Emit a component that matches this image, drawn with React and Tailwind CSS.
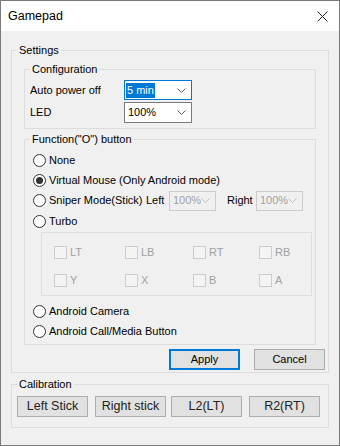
import React from 'react';

const font = { fontFamily: '"Liberation Sans", Arial, sans-serif' };

const Chevron = ({ color = '#606060' }) => (
    <svg width="9" height="5" viewBox="0 0 9 5" className="shrink-0">
        <polyline points="0.5,0.5 4.5,4.5 8.5,0.5" fill="none" stroke={color} strokeWidth="1" />
    </svg>
);

const Group = ({ label, className = '', children }) => (
    <fieldset className={`border border-[#dcdcdc] min-w-0 ${className}`}>
        {label && <legend className="ml-[5px] px-[2px] leading-[14px]">{label}</legend>}
        {children}
    </fieldset>
);

const Radio = ({ checked, label }) => (
    <div className="flex items-center h-[20px] whitespace-nowrap">
        <span className="w-[13px] h-[13px] rounded-full border border-[#333] bg-white flex items-center justify-center shrink-0">
            {checked && <span className="w-[7px] h-[7px] rounded-full bg-[#333]"></span>}
        </span>
        <span className="ml-[3px]">{label}</span>
    </div>
);

const Check = ({ label, className = '' }) => (
    <div className={`flex items-center ${className}`}>
        <span className="w-[13px] h-[13px] border border-[#cccccc] bg-[#f4f4f4] shrink-0"></span>
        <span className="ml-[3px] text-[#a0a0a0]">{label}</span>
    </div>
);

const DisabledSelect = () => (
    <div className="w-[47px] h-[20px] border border-[#cccccc] bg-[#f0f0f0] flex items-center justify-between pl-[3px] pr-[5px] text-[#a0a0a0] shrink-0">
        <span>100%</span>
        <Chevron color="#c0c0c0" />
    </div>
);

const Button = ({ children, primary, className = '' }) => (
    <div className={`h-[21px] flex items-center justify-center bg-[#e1e1e1] ${primary ? 'border-2 border-[#0078d7]' : 'border border-[#adadad]'} ${className}`}>
        {children}
    </div>
);

export default function App() {
    return (
        <div className="w-[340px] h-[446px] border border-[#7a7a7a] bg-[#f0f0f0] flex flex-col text-[11px] text-black" style={font}>
            {/* title bar */}
            <div className="h-[30px] bg-white flex items-center justify-between pl-[7px] pr-[11px] shrink-0">
                <span className="text-[12.5px]">Gamepad</span>
                <svg width="11" height="11" viewBox="0 0 11 11">
                    <path d="M0.5 0.5 L10.5 10.5 M10.5 0.5 L0.5 10.5" stroke="#222" strokeWidth="1" />
                </svg>
            </div>

            <Group label="Settings" className="mx-[10px] mt-[12px] w-[318px]">
                <div className="px-[12px] pb-[2px]">
                    <Group label="Configuration" className="mt-[5px]">
                        <div className="pl-[5px] pt-[4px] pb-[5px] flex flex-col gap-[2px]">
                            <div className="flex items-center h-[20px]">
                                <span className="w-[94px]">Auto power off</span>
                                <div className="w-[68px] h-[20px] border border-[#0078d7] bg-white flex items-center justify-between pl-[1px] pr-[5px]">
                                    <span className="bg-[#0078d7] text-white px-[1px] leading-[15px]">5 min</span>
                                    <Chevron />
                                </div>
                            </div>
                            <div className="flex items-center h-[21px]">
                                <span className="w-[94px]">LED</span>
                                <div className="w-[68px] h-[21px] border border-[#7a7a7a] bg-white flex items-center justify-between pl-[3px] pr-[5px]">
                                    <span>100%</span>
                                    <Chevron />
                                </div>
                            </div>
                        </div>
                    </Group>

                    <Group label={'Function("O") button'} className="mt-[3px]">
                        <div className="pl-[8px] pr-[3px] pt-[4px] pb-[3px]">
                            <Radio label="None" />
                            <Radio checked label="Virtual Mouse (Only Android mode)" />
                            <div className="flex items-center h-[21px] whitespace-nowrap">
                                <span className="w-[13px] h-[13px] rounded-full border border-[#333] bg-white shrink-0"></span>
                                <span className="ml-[3px] w-[97px]">Sniper Mode(Stick)</span>
                                <span className="w-[23px]">Left</span>
                                <DisabledSelect />
                                <span className="ml-[11px] w-[29px]">Right</span>
                                <DisabledSelect />
                            </div>
                            <Radio label="Turbo" />
                            <div className="ml-[8px] mt-[1px] border border-[#dcdcdc] pl-[12px] pt-[9px] pb-[5px] flex flex-col gap-[8px]">
                                <div className="flex h-[20px]">
                                    <Check label="LT" className="w-[71px]" />
                                    <Check label="LB" className="w-[68px]" />
                                    <Check label="RT" className="w-[66px]" />
                                    <Check label="RB" />
                                </div>
                                <div className="flex h-[20px]">
                                    <Check label="Y" className="w-[71px]" />
                                    <Check label="X" className="w-[68px]" />
                                    <Check label="B" className="w-[66px]" />
                                    <Check label="A" />
                                </div>
                            </div>
                            <div className="mt-[5px]">
                                <Radio label="Android Camera" />
                                <Radio label="Android Call/Media Button" />
                            </div>
                        </div>
                    </Group>

                    <div className="flex justify-end gap-[14px] mt-[4px] mr-[-9px]">
                        <Button primary className="w-[71px]">Apply</Button>
                        <Button className="w-[71px]">Cancel</Button>
                    </div>
                </div>
            </Group>

            <Group label="Calibration" className="mx-[10px] mt-[4px] w-[318px]">
                <div className="pl-[5px] pt-[5px] pb-[10px] flex gap-[7px] text-[12.5px] text-[#222]">
                    <Button className="w-[71px]">Left Stick</Button>
                    <Button className="w-[71px] -mr-[2px]">Right stick</Button>
                    <Button className="w-[71px]">L2(LT)</Button>
                    <Button className="w-[71px]">R2(RT)</Button>
                </div>
            </Group>
        </div>
    );
}
